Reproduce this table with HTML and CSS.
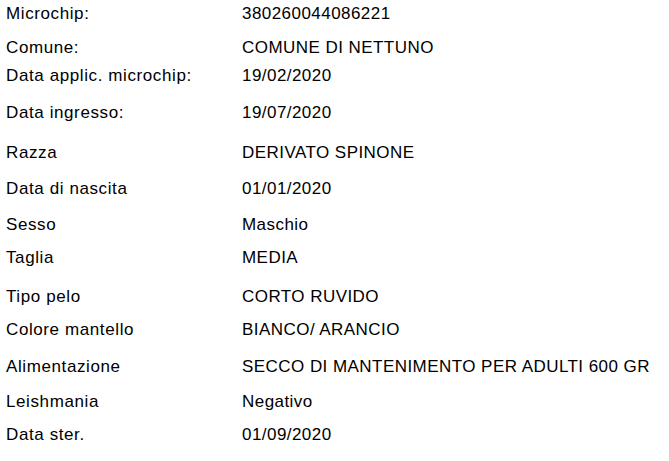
FILE: index.html
```html
<!DOCTYPE html>
<html lang="it">
<head>
<meta charset="utf-8">
<link rel="stylesheet" href="styles.css">
<title>Scheda</title>
</head>
<body>
<div class="sheet">
  <div class="label">Microchip:</div><div class="value">380260044086221</div>
  <div class="label">Comune:</div><div class="value">COMUNE DI NETTUNO</div>
  <div class="label">Data applic. microchip:</div><div class="value">19/02/2020</div>
  <div class="label">Data ingresso:</div><div class="value">19/07/2020</div>
  <div class="label">Razza</div><div class="value">DERIVATO SPINONE</div>
  <div class="label">Data di nascita</div><div class="value">01/01/2020</div>
  <div class="label">Sesso</div><div class="value">Maschio</div>
  <div class="label">Taglia</div><div class="value">MEDIA</div>
  <div class="label">Tipo pelo</div><div class="value">CORTO RUVIDO</div>
  <div class="label">Colore mantello</div><div class="value">BIANCO/ ARANCIO</div>
  <div class="label">Alimentazione</div><div class="value">SECCO DI MANTENIMENTO PER ADULTI 600 GR</div>
  <div class="label">Leishmania</div><div class="value">Negativo</div>
  <div class="label">Data ster.</div><div class="value">01/09/2020</div>
</div>
</body>
</html>
```
FILE: styles.css
```css
html, body {
  margin: 0;
  padding: 0;
  background: #ffffff;
}
body {
  font-family: "Liberation Sans", Arial, sans-serif;
  font-size: 17px;
  color: #000000;
}
.sheet {
  display: grid;
  grid-template-columns: 236px auto;
  grid-template-rows: 34px 28px 37px 40px 36px 36.4px 32.6px 38.7px 33.7px 37px 34.6px 32.7px 30px;
  padding: 4.9px 0 0 6px;
}
.label, .value {
  line-height: 18px;
  white-space: nowrap;
}
.label {
  letter-spacing: 0.6px;
}
.value {
  letter-spacing: 0.45px;
}
```
